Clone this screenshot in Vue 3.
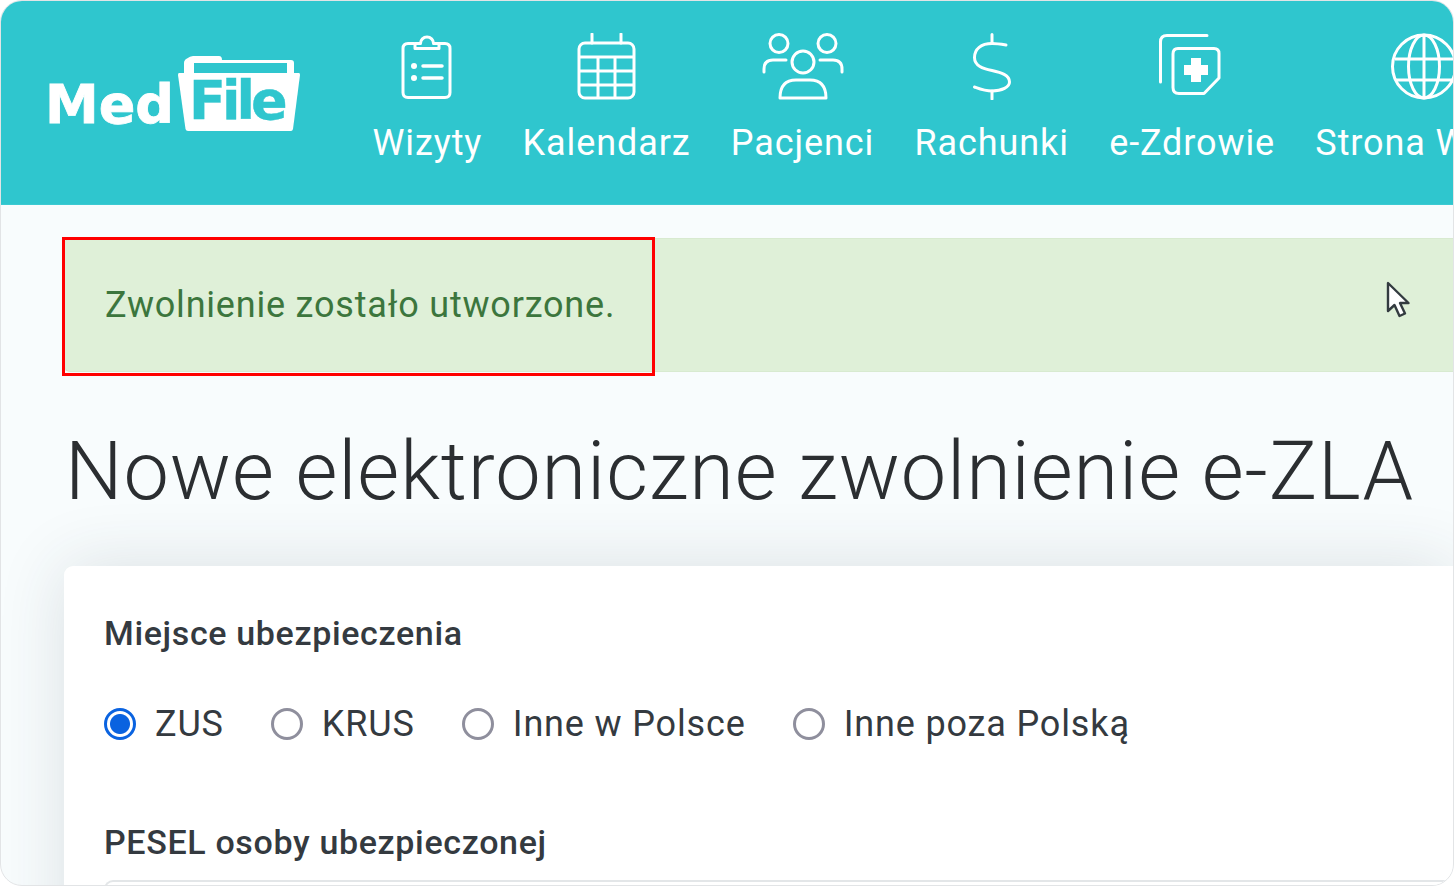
<script setup>
const radios = [
  { label: 'ZUS', on: true },
  { label: 'KRUS', on: false },
  { label: 'Inne w Polsce', on: false },
  { label: 'Inne poza Polską', on: false },
]
</script>

<template>
  <div class="frame">
    <header class="top">
      <div class="logo">
        <span class="med">Med</span>
        <span class="folder">
          <svg class="folder-bg" width="122" height="76" viewBox="0 0 122 76">
            <path fill-rule="evenodd" fill="#fff" d="M6 18V8q0-3 3-4.500 3-2.500 6-2.500h26q3 0 3 4h69q3 0 3 3v10h-7V8H16v10z"/>
            <path d="M1 18h120q1 0 1 2l-7 54q-.5 2-2 2H10q-2 0-2.500-2L0 20q0-2 1-2z" fill="#fff"/>
          </svg>
          <span class="file">File</span>
        </span>
      </div>
      <nav class="nav">
        <a class="item">
          <svg class="ic" viewBox="0 0 52 67" width="52" height="67">
            <g fill="none" stroke="#fff" stroke-width="3" stroke-linecap="round">
              <path d="M13 10.500H7q-5 0-5 5v44q0 5 5 5h37q5 0 5-5v-44q0-5-5-5h-6"/>
              <path d="M14 15.500v-5h5.500a6.500 6.500 0 1 1 13 0H38v5z" stroke-linejoin="round"/>
              <path d="M22 33h19M22 45h19" stroke-width="3.500"/>
            </g>
            <circle cx="13" cy="33" r="3" fill="#fff"/><circle cx="13" cy="45" r="3" fill="#fff"/>
          </svg>
          <span>Wizyty</span>
        </a>
        <a class="item">
          <svg class="ic" viewBox="0 0 59 67" width="59" height="67">
            <g fill="none" stroke="#fff" stroke-width="3">
              <rect x="2" y="10" width="55" height="55" rx="6"/>
              <path d="M15 1v9M44 1v9" stroke-linecap="round"/>
              <path d="M2 24h55M2 38h55M2 52h55M21 24v41M38 24v41"/>
            </g>
          </svg>
          <span>Kalendarz</span>
        </a>
        <a class="item">
          <svg class="ic" viewBox="0 0 84 67" width="84" height="67">
            <g fill="none" stroke="#fff" stroke-width="3" stroke-linecap="round">
              <circle cx="18" cy="10.500" r="9"/><circle cx="66" cy="10.500" r="9"/><circle cx="42" cy="29" r="11"/>
              <path d="M3 39v-3q0-9 9-9h13M81 39v-3q0-9-9-9H59"/>
              <path d="M19 65q0-18 16-18h14q16 0 16 18z" stroke-linejoin="round"/>
            </g>
          </svg>
          <span>Pacjenci</span>
        </a>
        <a class="item">
          <svg class="ic" viewBox="0 0 40 67" width="40" height="67">
            <g fill="none" stroke="#fff" stroke-width="3" stroke-linecap="round">
              <path d="M20 1.500v9M20 58v8"/>
              <path d="M34 12C28 11 25 10.500 20 10.500 9 10.500 2.500 16 2.500 24.500 2.500 33 11 35.500 20 37.500 29 39.500 37.500 42 37.500 49 37.500 54 30 58 20 58 13 58 8 56 2.500 54"/>
            </g>
          </svg>
          <span>Rachunki</span>
        </a>
        <a class="item">
          <svg class="ic" viewBox="0 0 68 67" width="68" height="67">
            <g fill="none" stroke="#fff" stroke-width="3" stroke-linecap="round" stroke-linejoin="round">
              <path d="M2.500 49V9q0-6.500 6.500-6.500h40"/>
              <path d="M20 15.500h36q5 0 5 5V45L46 60.500H21q-6 0-6-6V21q0-5.500 5-5.500z"/>
            </g>
            <path d="M33 25h10v7h7v10h-7v7H33v-7h-7V32h7z" fill="#fff"/>
          </svg>
          <span>e-Zdrowie</span>
        </a>
        <a class="item web">
          <svg class="ic" viewBox="0 0 66 67" width="66" height="67">
            <g fill="none" stroke="#fff" stroke-width="3">
              <circle cx="33" cy="33.500" r="31.500"/>
              <ellipse cx="33" cy="33.500" rx="15.500" ry="31.500"/>
              <path d="M4 26h58M4 47h58M33 2v63"/>
            </g>
          </svg>
          <span>Strona WWW</span>
        </a>
      </nav>
    </header>

    <main class="page">
      <div class="alert">
        <span class="alert-text">Zwolnienie zostało utworzone.</span>
        <svg class="cursor" width="26" height="38" viewBox="0 0 26 38">
          <path d="M2 2v28l6.500-6 5 11 5.500-2.500-5-10.500h8.500z" fill="#fff" stroke="#333b40" stroke-width="2.400" stroke-linejoin="round"/>
        </svg>
      </div>
      <div class="mark"></div>
      <h1 class="title">Nowe elektroniczne zwolnienie e-ZLA</h1>
      <section class="card">
        <h2 class="label">Miejsce ubezpieczenia</h2>
        <div class="radios">
          <label v-for="r in radios" :key="r.label" class="radio">
            <span class="dot" :class="{ on: r.on }"></span>
            <span>{{ r.label }}</span>
          </label>
        </div>
        <h2 class="label pesel">PESEL osoby ubezpieczonej</h2>
        <div class="input"></div>
      </section>
    </main>
  </div>
</template>

<style>
html, body { margin: 0; background: #fff; overflow: hidden; }
</style>

<style scoped>
.frame {
  width: 1454px;
  height: 886px;
  box-sizing: border-box;
  border: 1px solid #e2e4e6;
  border-radius: 22px;
  overflow: hidden;
  background: #f8fcfd;
  font-family: Roboto, "Liberation Sans", sans-serif;
  display: flex;
  flex-direction: column;
}
.top {
  flex: none;
  height: 204px;
  background: #2fc6ce;
  display: flex;
  color: #fff;
  border-bottom: 1px solid #3ccad2;
  box-sizing: border-box;
}
.logo {
  width: 371.500px;
  flex: none;
  display: flex;
  align-items: flex-start;
  padding: 54px 0 0 44px;
  box-sizing: border-box;
}
.med {
  font: 700 54px/1 "DejaVu Sans", sans-serif;
  -webkit-text-stroke: 0.8px #fff;
  margin-top: 23px;
  width: 133px;
}
.folder { position: relative; width: 122px; height: 76px; }
.folder-bg { display: block; }
.file {
  position: absolute;
  left: 11px;
  top: 19px;
  font: 700 54px/1 "DejaVu Sans", sans-serif;
  -webkit-text-stroke: 0.4px #2fc6ce;
  color: #2fc6ce;
  letter-spacing: -4px;
}
.nav {
  display: flex;
  gap: 40.300px;
  white-space: nowrap;
}
.item {
  display: flex;
  flex-direction: column;
  align-items: center;
  padding-top: 32px;
  font-size: 36px;
  line-height: 42px;
  letter-spacing: 0.9px;
}
.item.web { align-items: flex-start; width: 240px; }
.item.web .ic { margin-left: 76px; }
.ic { display: block; margin-bottom: 22px; flex: none; }
.page {
  flex: 1;
  min-height: 0;
  padding: 33px 0 0 63px;
  display: flex;
  flex-direction: column;
  position: relative;
}
.alert {
  height: 134px;
  flex: none;
  background: #dff0d8;
  border: 1px solid #d8ead0;
  border-right: 0;
  border-radius: 6px 0 0 6px;
  box-sizing: border-box;
  display: flex;
  align-items: center;
  justify-content: space-between;
  padding: 0 36px 0 40px;
  color: #3c763d;
  font-size: 36px;
  letter-spacing: 0.8px;
}
.cursor { margin: 0 5px 0 0; position: relative; top: -5px; }
.mark {
  position: absolute;
  left: 61px;
  top: 32px;
  width: 593px;
  height: 139px;
  box-sizing: border-box;
  border: 3px solid #f00;
}
.title {
  margin: 52px 0 0 1px;
  font-weight: 300;
  font-size: 81px;
  line-height: 95px;
  letter-spacing: 0.94px;
  color: #2b2e31;
  white-space: nowrap;
}
.card {
  margin-top: 47px;
  flex: 1;
  background: #fff;
  border-radius: 9px 0 0 0;
  box-shadow: 0 0 68px rgba(40, 60, 70, 0.14);
  padding: 47px 0 0 40px;
  color: #343a40;
}
.label {
  margin: 0;
  font-size: 34px;
  line-height: 40px;
  font-weight: 500;
  letter-spacing: 0.65px;
}
.radios {
  display: flex;
  gap: 47px;
  margin-top: 50px;
  font-size: 36px;
  line-height: 42px;
  letter-spacing: 0.85px;
}
.radio { display: flex; align-items: center; gap: 19px; }
.dot {
  width: 32px;
  height: 32px;
  box-sizing: border-box;
  border-radius: 50%;
  border: 3px solid #8f8f9d;
  background: #fff;
}
.dot.on {
  border-color: #0a63e0;
  background: radial-gradient(circle, #0a63e0 0 9.500px, #fff 10.500px);
}
.pesel { margin-top: 77px; }
.input {
  height: 80px;
  margin: 18px 0 0 0;
  border: 2px solid #e3e6e8;
  border-radius: 9px 0 0 0;
  border-right: 0;
}
</style>
